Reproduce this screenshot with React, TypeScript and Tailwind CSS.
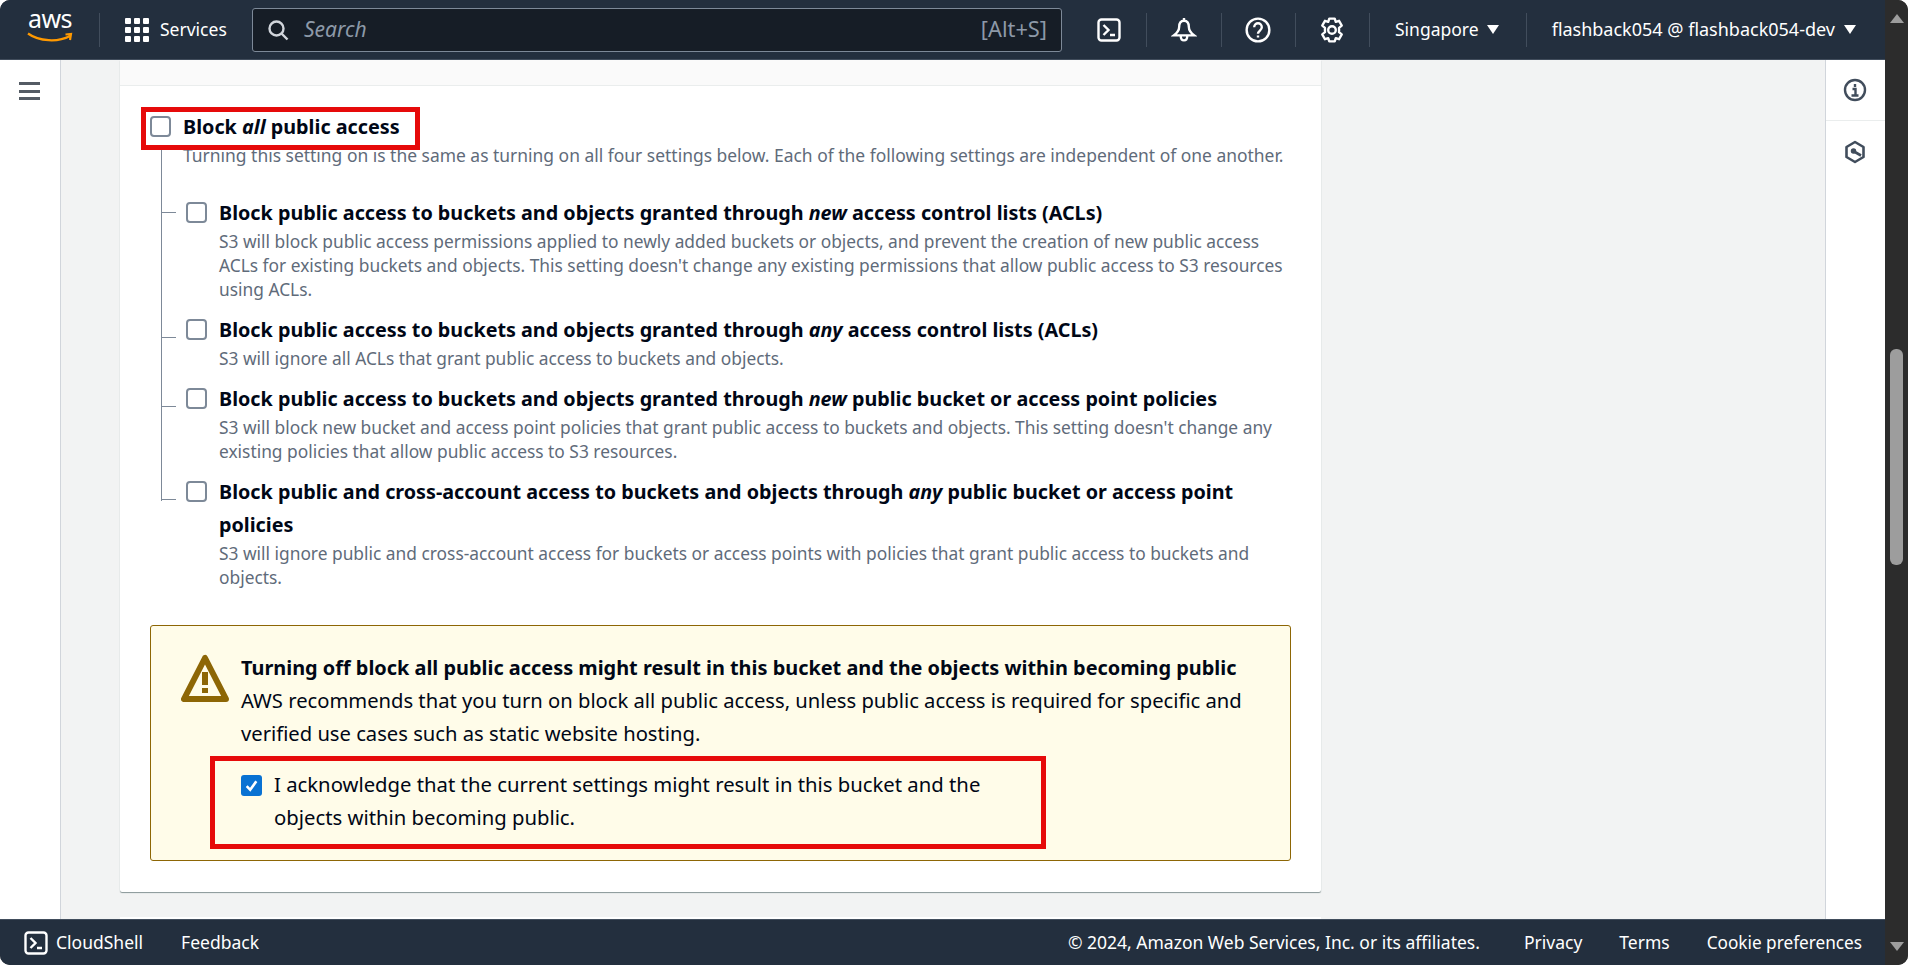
import { ReactNode } from "react";

const font = { fontFamily: '"Noto Sans", sans-serif' };

const Checkbox = ({ checked = false }: { checked?: boolean }) =>
  checked ? (
    <span className="flex h-[21px] w-[21px] shrink-0 items-center justify-center rounded-[3px] bg-[#0972d3]">
      <svg viewBox="0 0 14 14" className="h-[15px] w-[15px]" fill="none" stroke="#fff" strokeWidth="2.4">
        <path d="M2.5 7.5 5.8 11 11.5 3" />
      </svg>
    </span>
  ) : (
    <span className="block h-[21px] w-[21px] shrink-0 rounded-[4px] border-2 border-[#7d8998] bg-white" />
  );

const Divider = () => <div className="h-[34px] w-px shrink-0 bg-[#414d5c]" />;

const TopIcon = ({ children }: { children: ReactNode }) => (
  <svg viewBox="0 0 24 24" className="h-[26px] w-[26px]" fill="none" stroke="#fff" strokeWidth="2.2">
    {children}
  </svg>
);

const ShellIcon = ({ size }: { size: string }) => (
  <svg viewBox="0 0 24 24" className={size} fill="none" stroke="#fff" strokeWidth="2.4">
    <rect x="1.5" y="1.5" width="21" height="21" rx="3" />
    <path d="M6.5 7l5 5-5 5M13 17h5" />
  </svg>
);

const rows = [
  {
    title: (
      <>
        Block public access to buckets and objects granted through <em>new</em> access control lists (ACLs)
      </>
    ),
    desc: "S3 will block public access permissions applied to newly added buckets or objects, and prevent the creation of new public access ACLs for existing buckets and objects. This setting doesn't change any existing permissions that allow public access to S3 resources using ACLs.",
    tick: "mt-[16px]",
  },
  {
    title: (
      <>
        Block public access to buckets and objects granted through <em>any</em> access control lists (ACLs)
      </>
    ),
    desc: "S3 will ignore all ACLs that grant public access to buckets and objects.",
    tick: "mt-[24px]",
  },
  {
    title: (
      <>
        Block public access to buckets and objects granted through <em>new</em> public bucket or access point policies
      </>
    ),
    desc: "S3 will block new bucket and access point policies that grant public access to buckets and objects. This setting doesn't change any existing policies that allow public access to S3 resources.",
    tick: "mt-[24px]",
  },
  {
    title: (
      <>
        Block public and cross-account access to buckets and objects through <em>any</em> public bucket or access point
        policies
      </>
    ),
    desc: "S3 will ignore public and cross-account access for buckets or access points with policies that grant public access to buckets and objects.",
    tick: "mt-[24px]",
  },
];

export default function App() {
  return (
    <div style={font} className="flex h-[965px] w-full overflow-hidden rounded-[10px] bg-[#2c2c2c] text-[#000716]">
      <div className="flex min-w-0 flex-1 flex-col">
        <header className="flex h-[60px] shrink-0 items-center border-b border-[#414d5c] bg-[#232f3e] text-white">
          <div className="flex h-[40px] w-[99px] shrink-0 flex-col items-center pl-[1px]">
            <span className="mt-[-7px] text-[25px] leading-[30px] tracking-[-0.5px]">aws</span>
            <svg viewBox="0 0 46 11" className="mt-[-1px] h-[11px] w-[46px]" fill="none" stroke="#ff9900" strokeWidth="2.2">
              <path d="M1 1.5C12 9.5 31 10.5 43 4M38.5 2.5 44 2 43 8" />
            </svg>
          </div>
          <Divider />
          <svg viewBox="0 0 24 24" className="ml-[25px] h-[24px] w-[24px] shrink-0" fill="#fff">
            <rect x="0" y="0" width="6" height="6" rx="1" />
            <rect x="9" y="0" width="6" height="6" rx="1" />
            <rect x="18" y="0" width="6" height="6" rx="1" />
            <rect x="0" y="9" width="6" height="6" rx="1" />
            <rect x="9" y="9" width="6" height="6" rx="1" />
            <rect x="18" y="9" width="6" height="6" rx="1" />
            <rect x="0" y="18" width="6" height="6" rx="1" />
            <rect x="9" y="18" width="6" height="6" rx="1" />
            <rect x="18" y="18" width="6" height="6" rx="1" />
          </svg>
          <span className="ml-[11px] w-[92px] shrink-0 text-[17.5px]">Services</span>
          <div className="flex h-[44px] w-[810px] shrink-0 items-center rounded-[3px] border border-[#7d8998] bg-[#161d26] px-[14px]">
            <svg viewBox="0 0 22 22" className="h-[22px] w-[22px]" fill="none" stroke="#d1d5db" strokeWidth="2.4">
              <circle cx="9.5" cy="9.5" r="7" />
              <path d="M14.5 14.5 20.5 20.5" />
            </svg>
            <span className="ml-[15px] flex-1 text-[21px] italic text-[#8d99a8]">Search</span>
            <span className="text-[21.8px] text-[#8d99a8]">[Alt+S]</span>
          </div>
          <div className="ml-[35px]">
            <ShellIcon size="h-[24px] w-[24px]" />
          </div>
          <div className="ml-[25px]">
            <Divider />
          </div>
          <div className="ml-[24px]">
            <TopIcon>
              <path d="M12 3.500c-3.500 0-4.500 3-4.500 6 0 3-1.500 5-5 7.500h19c-3.500-2.500-5-4.500-5-7.500 0-3-1-6-4.500-6zM12 1v2.500M9 17.500c0 5.500 6 5.500 6 0" />
            </TopIcon>
          </div>
          <div className="ml-[24px]">
            <Divider />
          </div>
          <div className="ml-[23px]">
            <TopIcon>
              <circle cx="12" cy="12" r="10.500" />
              <path d="M8.500 9.500c0-5 7-5 7 0 0 3-3.500 3-3.500 6M12 17v2" />
            </TopIcon>
          </div>
          <div className="ml-[24px]">
            <Divider />
          </div>
          <div className="ml-[23px]">
            <TopIcon>
              <path d="M9.500 1.500h5l1 3 3-1 2.500 4.500-2.500 2v4l2.500 2-2.500 4.500-3-1-1 3h-5l-1-3-3 1L3 16l2.500-2v-4L3 8l2.500-4.500 3 1z" strokeLinejoin="round" />
              <circle cx="12" cy="12" r="3.500" />
            </TopIcon>
          </div>
          <div className="ml-[24px]">
            <Divider />
          </div>
          <span className="ml-[25px] text-[17.5px]">Singapore</span>
          <span className="ml-[8px] h-0 w-0 border-x-[6px] border-t-[9px] border-x-transparent border-t-white" />
          <div className="ml-[27px]">
            <Divider />
          </div>
          <span className="ml-[25px] text-[18px] whitespace-nowrap">flashback054 @ flashback054-dev</span>
          <span className="ml-[9px] h-0 w-0 border-x-[6px] border-t-[9px] border-x-transparent border-t-white" />
        </header>

        <div className="flex min-h-0 flex-1 bg-[#f2f3f3]">
          <nav className="flex w-[61px] shrink-0 justify-center border-r border-[#d1d5db] bg-white pr-[1px] pt-[22px]">
            <div className="flex h-[18px] w-[21px] flex-col justify-between">
              <span className="h-[3px] bg-[#545b64]" />
              <span className="h-[3px] bg-[#545b64]" />
              <span className="h-[3px] bg-[#545b64]" />
            </div>
          </nav>

          <main className="min-w-0 flex-1 pl-[59px]">
            <section className="relative h-[832px] w-[1201px] rounded-b-[2px] bg-white shadow-[0_1px_1px_#879596]">
              <div className="h-[26px] border-b border-[#eaeded] bg-[#fafafa]" />

              <div className="pl-[30px] pr-[29px] pt-[24px]">
                <div className="flex h-[33px] items-center text-[19.8px] leading-[33px] font-bold">
                  <Checkbox />
                  <span className="ml-[12px]">
                    Block <em>all</em> public access
                  </span>
                </div>
                <p className="ml-[33px] whitespace-nowrap text-[17.45px] leading-[24px] text-[#5f6b7a]">
                  Turning this setting on is the same as turning on all four settings below. Each of the following settings are independent of one another.
                </p>

                <div className="relative mt-[29px] flex flex-col gap-[12px] pl-[11px]">
                  <span className="absolute top-[-48px] left-[11px] h-[353px] w-px bg-[#7d8998]" />
                  {rows.map((row, i) => (
                    <div key={i} className="flex">
                      <span className={`h-px w-[15px] shrink-0 bg-[#7d8998] ${row.tick}`} />
                      <div className="ml-[10px] mt-[6px] shrink-0">
                        <Checkbox />
                      </div>
                      <div className="ml-[12px] w-[1074px]">
                        <h3 className="text-[19.75px] leading-[33px] font-bold">{row.title}</h3>
                        <p className="text-[17.35px] leading-[24px] text-[#5f6b7a]">{row.desc}</p>
                      </div>
                    </div>
                  ))}
                </div>

                <div className="mt-[36px] mr-[1px] flex h-[236px] rounded-[3px] border border-[#8d6605] bg-[#fffce9] pl-[30px] pt-[28px]">
                  <svg viewBox="0 0 48 48" className="h-[48px] w-[48px] shrink-0" fill="none">
                    <path d="M24 4 3 45h42z" stroke="#8d6605" strokeWidth="6" strokeLinejoin="round" />
                    <rect x="21" y="18" width="6" height="13" fill="#8d6605" />
                    <rect x="21" y="34" width="6" height="5" fill="#8d6605" />
                  </svg>
                  <div className="ml-[12px] mt-[-3px] w-[1020px] text-[20.2px] leading-[33px]">
                    <h4 className="whitespace-nowrap text-[19.9px] font-bold">
                      Turning off block all public access might result in this bucket and the objects within becoming public
                    </h4>
                    <p className="w-[1010px]">
                      AWS recommends that you turn on block all public access, unless public access is required for specific and verified use cases such as static website hosting.
                    </p>
                    <div className="mt-[18px] flex">
                      <div className="mt-[7px]">
                        <Checkbox checked />
                      </div>
                      <p className="ml-[12px] w-[760px] text-[20.3px]">
                        I acknowledge that the current settings might result in this bucket and the objects within becoming public.
                      </p>
                    </div>
                  </div>
                </div>
              </div>

              <span className="absolute top-[47px] left-[21px] h-[43px] w-[279px] border-[5px] border-[#e60a0a]" />
              <span className="absolute top-[696px] left-[90px] h-[93px] w-[836px] border-[5px] border-[#e60a0a]" />
            </section>
            <div className="mt-[25px] h-[2px] w-[1201px] bg-white" />
          </main>

          <aside className="w-[60px] shrink-0 border-l border-[#d1d5db] bg-white">
            <div className="flex h-[61px] items-center justify-center border-b border-[#eaeded] pr-[1px]">
              <svg viewBox="0 0 24 24" className="h-[24px] w-[24px]" fill="none" stroke="#414d5c" strokeWidth="2.4">
                <circle cx="12" cy="12" r="10" />
                <path d="M9.500 11h3v6M8.500 17.500h7M12 6v3" />
              </svg>
            </div>
            <div className="flex h-[62px] items-center justify-center pr-[1px]">
              <svg viewBox="0 0 24 24" className="h-[24px] w-[24px]" fill="none" stroke="#414d5c" strokeWidth="2.6">
                <path d="M12 2l8.500 5v10L12 22l-8.500-5V7z" strokeLinejoin="round" />
                <circle cx="10.500" cy="11" r="2" fill="#414d5c" strokeWidth="1.500" />
                <path d="M11 11.500l7 4" />
              </svg>
            </div>
          </aside>
        </div>

        <footer className="flex h-[46px] shrink-0 items-center border-t border-[#414d5c] bg-[#232f3e] pl-[24px] pr-[23px] text-[17.5px] text-white">
          <ShellIcon size="h-[24px] w-[24px]" />
          <span className="ml-[8px]">CloudShell</span>
          <span className="ml-[38px]">Feedback</span>
          <span className="ml-auto">© 2024, Amazon Web Services, Inc. or its affiliates.</span>
          <span className="ml-[44px]">Privacy</span>
          <span className="ml-[37px]">Terms</span>
          <span className="ml-[37px] text-[17.2px]">Cookie preferences</span>
        </footer>
      </div>

      <div className="flex w-[23px] shrink-0 flex-col items-center bg-[#2c2c2c]">
        <span className="mt-[14px] h-0 w-0 border-x-[7px] border-b-[9px] border-x-transparent border-b-[#9d9d9d]" />
        <span className="mt-[326px] h-[216px] w-[13px] rounded-[6px] bg-[#9d9d9d]" />
        <span className="mt-auto mb-[14px] h-0 w-0 border-x-[7px] border-t-[9px] border-x-transparent border-t-[#9d9d9d]" />
      </div>
    </div>
  );
}
